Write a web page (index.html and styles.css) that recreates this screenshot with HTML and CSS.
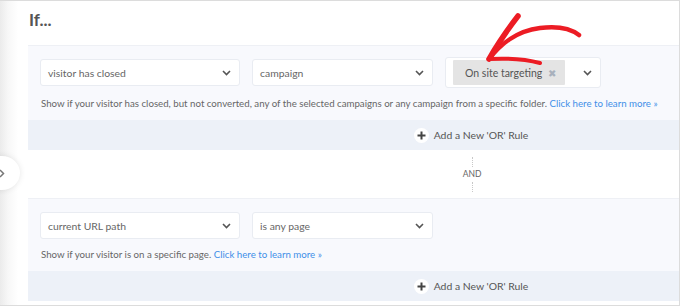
FILE: index.html
```html
<!DOCTYPE html>
<html lang="en">
<head>
    <meta charset="UTF-8">
    <meta name="viewport" content="width=device-width, initial-scale=1.0">
    <title>Display Rules</title>
    <link rel="stylesheet" href="styles.css">
</head>
<body>
    <div class="frame">
        <div class="side-toggle">
            <svg width="6" height="9" viewBox="0 0 6 9"><path d="M1 1l3.5 3.5L1 8" fill="none" stroke="#777" stroke-width="1.5"/></svg>
        </div>

        <h2 class="title">If...</h2>

        <div class="rule-group">
            <div class="rule">
                <div class="rule-fields tall">
                    <div class="select select-wide">
                        <span>visitor has closed</span>
                        <svg class="chev" width="9" height="6" viewBox="0 0 9 6"><path d="M1 1l3.5 3.5L8 1" fill="none" stroke="#555" stroke-width="1.6"/></svg>
                    </div>
                    <div class="select select-mid">
                        <span>campaign</span>
                        <svg class="chev" width="9" height="6" viewBox="0 0 9 6"><path d="M1 1l3.5 3.5L8 1" fill="none" stroke="#555" stroke-width="1.6"/></svg>
                    </div>
                    <div class="select select-tags">
                        <span class="tag">On site targeting <span class="tag-x">&#10006;</span></span>
                        <svg class="chev" width="9" height="6" viewBox="0 0 9 6"><path d="M1 1l3.5 3.5L8 1" fill="none" stroke="#555" stroke-width="1.6"/></svg>
                    </div>
                </div>
                <p class="help">Show if your visitor has closed, but not converted, any of the selected campaigns or any campaign from a specific folder. <a href="#">Click here to learn more &raquo;</a></p>
            </div>
            <div class="or-bar">
                <span class="plus">
                    <svg width="9" height="9" viewBox="0 0 9 9"><path d="M4.5 0.5v8M0.5 4.5h8" stroke="#444" stroke-width="2"/></svg>
                </span>
                Add a New 'OR' Rule
            </div>
        </div>

        <div class="and-sep">
            <span class="dots"></span>
            <span class="and">AND</span>
            <span class="dots"></span>
        </div>

        <div class="rule-group">
            <div class="rule">
                <div class="rule-fields">
                    <div class="select select-wide">
                        <span>current URL path</span>
                        <svg class="chev" width="9" height="6" viewBox="0 0 9 6"><path d="M1 1l3.5 3.5L8 1" fill="none" stroke="#555" stroke-width="1.6"/></svg>
                    </div>
                    <div class="select select-mid">
                        <span>is any page</span>
                        <svg class="chev" width="9" height="6" viewBox="0 0 9 6"><path d="M1 1l3.5 3.5L8 1" fill="none" stroke="#555" stroke-width="1.6"/></svg>
                    </div>
                </div>
                <p class="help">Show if your visitor is on a specific page. <a href="#">Click here to learn more &raquo;</a></p>
            </div>
            <div class="or-bar">
                <span class="plus">
                    <svg width="9" height="9" viewBox="0 0 9 9"><path d="M4.5 0.5v8M0.5 4.5h8" stroke="#444" stroke-width="2"/></svg>
                </span>
                Add a New 'OR' Rule
            </div>
        </div>

        <!-- hand drawn annotation arrow -->
        <svg class="arrow" width="680" height="100" viewBox="0 0 680 100">
            <g fill="none" stroke="#ec1c24" stroke-linecap="round" stroke-linejoin="round">
                <path d="M518 15 C508 28 497 44 489 58" stroke-width="5.5"/>
                <path d="M489 58 C500 44 515 30 540 27 C556 25 570 27 579 34" stroke-width="4.5"/>
                <path d="M489 58 C507 57 525 58 540 62" stroke-width="4"/>
            </g>
        </svg>
    </div>
</body>
</html>
```

FILE: styles.css
```css
* {
    margin: 0;
    padding: 0;
    box-sizing: border-box;
}

body {
    font-family: 'Lato', 'Open Sans', sans-serif;
    background: #fff;
    color: #666;
}

.frame {
    position: relative;
    width: 680px;
    height: 306px;
    border-top: 1px solid #dcdcdc;
    border-right: 1px solid #dcdcdc;
    border-bottom: 1px solid #dcdcdc;
    background: linear-gradient(to right, #ebebeb 0, #f7f7f7 8px, #fff 18px);
    padding: 9px 0 0 28px;
    overflow: hidden;
}

.title {
    font-size: 17px;
    font-weight: 700;
    color: #555;
    line-height: 20px;
    padding-left: 1px;
    margin-bottom: 15px;
}

.rule-group {
    background: #f8f9fd;
    border-top: 1px solid #eef0f5;
}

.rule {
    padding: 13px 12px 11px;
}

.rule-fields {
    display: flex;
    align-items: center;
    gap: 12px;
}

.rule-fields.tall {
    margin-top: -2px;
    min-height: 31px;
}

.select {
    display: flex;
    align-items: center;
    justify-content: space-between;
    height: 27px;
    background: #fff;
    border: 1px solid #e9ecf2;
    border-radius: 3px;
    padding: 0 8px 0 7px;
    font-size: 10.4px;
    color: #666;
}

.select-wide {
    width: 200px;
}

.select-mid {
    width: 181px;
}

.select-tags {
    width: 156px;
    height: 31px;
    padding: 0 8px 0 7px;
}

.chev {
    flex-shrink: 0;
}

.tag {
    display: flex;
    align-items: center;
    height: 25px;
    width: 112px;
    background: #e4e4e4;
    border-radius: 1px;
    padding-left: 12px;
    color: #555;
    font-size: 10.5px;
    gap: 6px;
}

.tag-x {
    color: #a8b0bc;
    font-size: 10px;
}

.help {
    margin-top: 9px;
    font-size: 9.7px;
    line-height: 12px;
    color: #666;
    padding-left: 1px;
    white-space: nowrap;
}

.help a {
    color: #3f8fe8;
    text-decoration: none;
}

.or-bar {
    display: flex;
    align-items: center;
    justify-content: center;
    gap: 5px;
    height: 30px;
    background: #edf1f8;
    font-size: 10.4px;
    color: #555;
    padding-left: 235px;
}

.plus {
    display: flex;
    align-items: center;
    justify-content: center;
    width: 15px;
    height: 15px;
    border-radius: 50%;
    background: #fff;
}

.and-sep {
    height: 48px;
    display: flex;
    flex-direction: column;
    align-items: center;
    justify-content: center;
    gap: 3px;
    padding-left: 237px;
}

.dots {
    width: 0;
    height: 10px;
    border-left: 1px dotted #c8c8c8;
}

.and {
    font-size: 8.5px;
    color: #666;
    line-height: 9px;
}

.side-toggle {
    position: absolute;
    left: -16px;
    top: 155px;
    width: 36px;
    height: 34px;
    border-radius: 50%;
    background: #fff;
    box-shadow: 0 0 6px rgba(0, 0, 0, 0.1);
    display: flex;
    align-items: center;
    justify-content: flex-end;
    padding-right: 15px;
}

.arrow {
    position: absolute;
    left: 0;
    top: 0;
    pointer-events: none;
}
```
